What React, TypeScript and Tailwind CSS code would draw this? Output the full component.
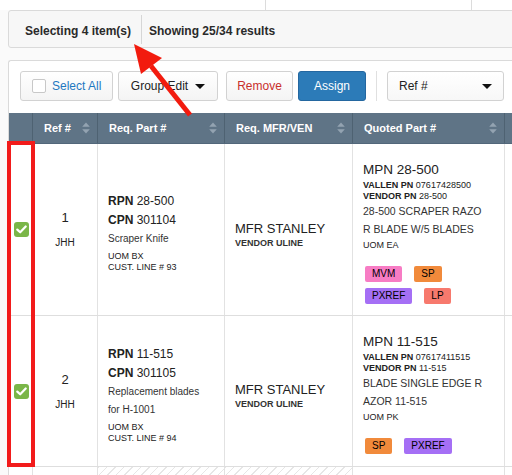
import React from 'react';

const SortIcon = () => (
  <svg width="8" height="12" viewBox="0 0 8 12" className="shrink-0">
    <path d="M4 0.5 L7.8 4.8 L0.2 4.8 Z" fill="#93a3b1" />
    <path d="M4 11.5 L7.8 7.2 L0.2 7.2 Z" fill="#93a3b1" />
  </svg>
);

const Caret = () => (
  <svg width="10" height="5" viewBox="0 0 10 5">
    <path d="M0 0 L10 0 L5 5 Z" fill="#111" />
  </svg>
);

const GreenCheck = () => (
  <div className="w-[15px] h-[15px] rounded-[3px] bg-[#7ab648] flex items-center justify-center">
    <svg width="11" height="9" viewBox="0 0 11 9">
      <path d="M1.3 4.6 L4.2 7.3 L9.7 1.5" stroke="#fff" strokeWidth="2.2" fill="none" strokeLinecap="round" strokeLinejoin="round" />
    </svg>
  </div>
);

const Badge = ({ label, color }: { label: string; color: string }) => (
  <span className={`h-[16px] px-[7px] rounded-[2px] text-[10px] leading-[16px] text-black ${color}`}>{label}</span>
);

const HeaderCell = ({ label, className }: { label: string; className: string }) => (
  <div className={`flex items-center justify-between pl-[11px] pr-[7px] border-l border-[#4e6272] ${className}`}>
    <span>{label}</span>
    <SortIcon />
  </div>
);

type Row = {
  ref: string;
  height: string;
  rpn: string;
  cpn: string;
  desc: string[];
  uom: string;
  line: string;
  mpn: string;
  vallen: string;
  vendorPn: string;
  quoted: string[];
  qUom: string;
  badges: { label: string; color: string }[][];
};

const rows: Row[] = [
  {
    ref: '1',
    height: 'h-[172px]',
    rpn: '28-500',
    cpn: '301104',
    desc: ['Scraper Knife'],
    uom: 'BX',
    line: '93',
    mpn: '28-500',
    vallen: '07617428500',
    vendorPn: '28-500',
    quoted: ['28-500 SCRAPER RAZO', 'R BLADE W/5 BLADES'],
    qUom: 'EA',
    badges: [
      [
        { label: 'MVM', color: 'bg-[#f77cc4]' },
        { label: 'SP', color: 'bg-[#f18a3b]' },
      ],
      [
        { label: 'PXREF', color: 'bg-[#a56ff5]' },
        { label: 'LP', color: 'bg-[#f7796d]' },
      ],
    ],
  },
  {
    ref: '2',
    height: 'h-[151px]',
    rpn: '11-515',
    cpn: '301105',
    desc: ['Replacement blades', 'for H-1001'],
    uom: 'BX',
    line: '94',
    mpn: '11-515',
    vallen: '07617411515',
    vendorPn: '11-515',
    quoted: ['BLADE SINGLE EDGE R', 'AZOR 11-515'],
    qUom: 'PK',
    badges: [
      [
        { label: 'SP', color: 'bg-[#f18a3b]' },
        { label: 'PXREF', color: 'bg-[#a56ff5]' },
      ],
    ],
  },
];

const hatch = 'bg-[repeating-linear-gradient(135deg,#e6e6e6_0px,#e6e6e6_1px,transparent_1px,transparent_6px)]';

export default function App() {
  return (
    <div className="relative w-[512px] h-[475px] overflow-hidden bg-[#fafafa] text-[#222] font-['Liberation_Sans',Arial,sans-serif]">
      {/* leftover of previous row */}
      <div className="h-[10px] bg-white flex">
        <div className="w-[265px]" />
        <div className="w-[207px] border-l border-r border-[#dcdcdc]" />
      </div>

      {/* selection info */}
      <div className="ml-[8px] w-[520px] h-[38px] pt-[4px] bg-[#f7f7f7] border border-[#dadada] rounded-[3px] flex items-center text-[12px] font-bold text-[#2a2a2a]">
        <div className="pl-[16px] pr-[10px]">Selecting 4 item(s)</div>
        <div className="w-px h-[29px] -mt-[4px] bg-[#d6d6d6]" />
        <div className="pl-[7px]">Showing 25/34 results</div>
      </div>

      <div className="h-[12px]" />

      {/* toolbar + table panel */}
      <div className="ml-[8px] w-[520px] bg-white border-t border-l border-[#dadada] rounded-tl-[3px]">
        <div className="h-[52px] pt-[10px] pl-[11px] flex gap-[5px] text-[12px]">
          <div className="w-[93px] h-[30px] border border-[#d2d2d2] rounded-[3px] bg-gradient-to-b from-white to-[#f4f4f4] flex items-center pl-[11px] gap-[6px]">
            <div className="w-[14px] h-[14px] border border-[#c8c8c8] rounded-[2px] bg-white" />
            <span className="text-[#1f78c1]">Select All</span>
          </div>
          <div className="w-[100px] h-[30px] border border-[#d2d2d2] rounded-[3px] bg-gradient-to-b from-white to-[#f4f4f4] flex items-center justify-center gap-[7px] text-[#222]">
            <span>Group Edit</span>
            <Caret />
          </div>
          <div className="ml-[3px] w-[67px] h-[30px] border border-[#d2d2d2] rounded-[3px] bg-gradient-to-b from-white to-[#f4f4f4] flex items-center justify-center text-[#c9302c]">
            Remove
          </div>
          <div className="w-[68px] h-[30px] border border-[#2467a0] rounded-[3px] bg-[#2c7bb8] flex items-center justify-center text-white">
            Assign
          </div>
          <div className="mx-[5px] w-px h-[30px] bg-[#e0e0e0]" />
          <div className="w-[117px] h-[30px] border border-[#d2d2d2] rounded-[3px] bg-gradient-to-b from-white to-[#f7f7f7] flex items-center justify-between pl-[11px] pr-[11px] text-[#222]">
            <span>Ref #</span>
            <Caret />
          </div>
        </div>

        {/* table header */}
        <div className="h-[31px] bg-[#5f7486] flex text-white text-[11px] font-bold border-b border-[#52677a]">
          <div className="w-[23px]" />
          <HeaderCell label="Ref #" className="w-[65px]" />
          <HeaderCell label="Req. Part #" className="w-[127px]" />
          <HeaderCell label="Req. MFR/VEN" className="w-[128px]" />
          <HeaderCell label="Quoted Part #" className="w-[152px]" />
          <div className="flex-1 border-l border-[#4e6272]" />
        </div>

        {/* rows */}
        {rows.map((r) => (
          <div key={r.ref} className={`${r.height} flex border-b border-[#dedede] bg-white`}>
            <div className="w-[23px] flex items-center justify-center pl-[1px]">
              <GreenCheck />
            </div>
            <div className="w-[65px] border-l border-[#e2e2e2] flex flex-col items-center justify-center">
              <div className="text-[13px] leading-[16px]">{r.ref}</div>
              <div className="text-[10px] leading-[12px] mt-[11px]">JHH</div>
            </div>
            <div className="w-[127px] border-l border-[#e2e2e2] pl-[10px] flex flex-col justify-center pt-[6px]">
              <div className="text-[12px] leading-[19px]"><b>RPN</b> {r.rpn}</div>
              <div className="text-[12px] leading-[19px]"><b>CPN</b> {r.cpn}</div>
              {r.desc.map((d) => (
                <div key={d} className="text-[10px] leading-[18px] text-[#333]">{d}</div>
              ))}
              <div className="text-[9px] leading-[12px] mt-[2px]">UOM {r.uom}</div>
              <div className="text-[9px] leading-[11px]">CUST. LINE # {r.line}</div>
            </div>
            <div className="w-[128px] border-l border-[#e2e2e2] pl-[10px] flex flex-col justify-center pt-[10px]">
              <div className="text-[13px] leading-[17px]">MFR STANLEY</div>
              <div className="text-[9px] leading-[13px] font-bold text-[#333]">VENDOR ULINE</div>
            </div>
            <div className="w-[152px] border-l border-[#e2e2e2] pl-[10px] pt-[16px] whitespace-nowrap">
              <div className="text-[13.5px] leading-[20px]">MPN {r.mpn}</div>
              <div className="text-[9px] leading-[11px]"><b>VALLEN PN</b> {r.vallen}</div>
              <div className="text-[9px] leading-[11px]"><b>VENDOR PN</b> {r.vendorPn}</div>
              {r.quoted.map((q) => (
                <div key={q} className="text-[10.5px] leading-[18px] text-[#333]">{q}</div>
              ))}
              <div className="text-[9px] leading-[14px]">UOM {r.qUom}</div>
              <div className="mt-[14px] flex flex-col gap-[6px] pl-[2px]">
                {r.badges.map((line, i) => (
                  <div key={i} className="flex gap-[12px]">
                    {line.map((b) => (
                      <Badge key={b.label} label={b.label} color={b.color} />
                    ))}
                  </div>
                ))}
              </div>
            </div>
            <div className="flex-1 border-l border-[#e2e2e2]" />
          </div>
        ))}

        {/* next row, partly visible */}
        <div className="h-[20px] flex bg-white">
          <div className="w-[23px]" />
          <div className="w-[65px] border-l border-[#e2e2e2]" />
          <div className={`w-[127px] border-l border-[#e2e2e2] ${hatch}`} />
          <div className={`w-[128px] border-l border-[#e2e2e2] ${hatch}`} />
          <div className="w-[152px] border-l border-[#e2e2e2]" />
          <div className="flex-1 border-l border-[#e2e2e2]" />
        </div>
      </div>

      {/* annotation: red box around checkbox column */}
      <div className="absolute left-[7px] top-[141px] w-[28px] h-[326px] border-[4px] border-[#f21b1b]" />

      {/* annotation: red arrow */}
      <svg className="absolute left-0 top-0 pointer-events-none" width="512" height="475">
        <line x1="190" y1="115" x2="151" y2="66" stroke="#f21b0e" strokeWidth="5" />
        <path d="M134 44 L162 58 L141 74 Z" fill="#f21b0e" />
      </svg>
    </div>
  );
}
